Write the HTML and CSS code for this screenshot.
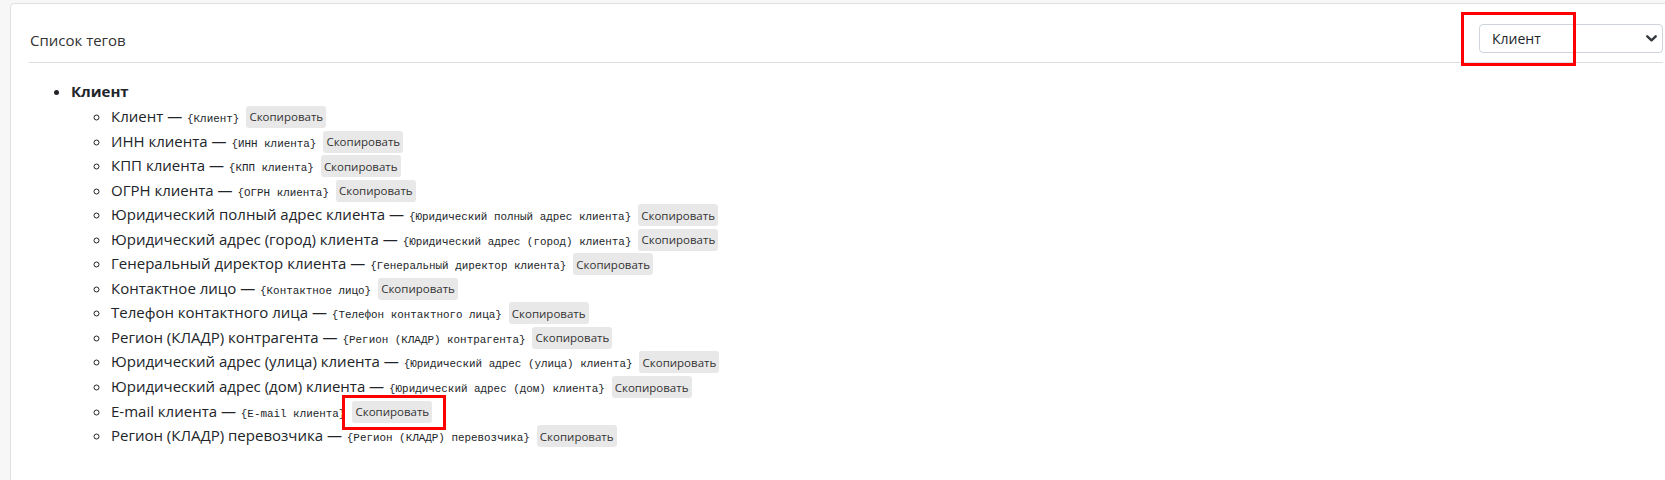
FILE: index.html
```html
<!DOCTYPE html>
<html lang="ru">
<head>
<meta charset="utf-8">
<title>Список тегов</title>
<link rel="stylesheet" href="styles.css">
</head>
<body>
<div class="card">
  <div class="card-header">
    <span class="card-title">Список тегов</span>
    <div class="select">
      <span>Клиент</span>
      <svg class="chev" width="11" height="7" viewBox="0 0 11 7"><path d="M1.3 1.3 L5.5 5.3 L9.7 1.3" fill="none" stroke="#343a40" stroke-width="2.4" stroke-linecap="round" stroke-linejoin="round"/></svg>
    </div>
  </div>
  <div class="card-body">
    <ul class="groups">
      <li><b class="group-name">Клиент</b>
        <ul class="tags">
          <li>Клиент — <code>{Клиент}</code> <button class="copy">Скопировать</button></li>
          <li>ИНН клиента — <code>{ИНН клиента}</code> <button class="copy">Скопировать</button></li>
          <li>КПП клиента — <code>{КПП клиента}</code> <button class="copy">Скопировать</button></li>
          <li>ОГРН клиента — <code>{ОГРН клиента}</code> <button class="copy">Скопировать</button></li>
          <li>Юридический полный адрес клиента — <code>{Юридический полный адрес клиента}</code> <button class="copy">Скопировать</button></li>
          <li>Юридический адрес (город) клиента — <code>{Юридический адрес (город) клиента}</code> <button class="copy">Скопировать</button></li>
          <li>Генеральный директор клиента — <code>{Генеральный директор клиента}</code> <button class="copy">Скопировать</button></li>
          <li>Контактное лицо — <code>{Контактное лицо}</code> <button class="copy">Скопировать</button></li>
          <li>Телефон контактного лица — <code>{Телефон контактного лица}</code> <button class="copy">Скопировать</button></li>
          <li>Регион (КЛАДР) контрагента — <code>{Регион (КЛАДР) контрагента}</code> <button class="copy">Скопировать</button></li>
          <li>Юридический адрес (улица) клиента — <code>{Юридический адрес (улица) клиента}</code> <button class="copy">Скопировать</button></li>
          <li>Юридический адрес (дом) клиента — <code>{Юридический адрес (дом) клиента}</code> <button class="copy">Скопировать</button></li>
          <li>E-mail клиента — <code>{E-mail клиента}</code> <button class="copy">Скопировать</button></li>
          <li>Регион (КЛАДР) перевозчика — <code>{Регион (КЛАДР) перевозчика}</code> <button class="copy">Скопировать</button></li>
        </ul>
      </li>
    </ul>
  </div>
</div>
<div class="mark mark-select"></div>
<div class="mark mark-button"></div>
</body>
</html>
```

FILE: styles.css
```css
html, body {
  margin: 0;
  padding: 0;
}
body {
  background: #f7f7f7;
  padding: 3px 0 0 10px;
  font-family: "Open Sans", "Noto Sans", sans-serif;
  color: #212529;
  overflow: hidden;
  height: 477px;
}
.card {
  background: #fff;
  border: 1px solid #e0e0e0;
  border-radius: 4px;
  margin-right: -17px;
  height: 520px;
}
.card-header {
  margin: 0 18px;
  height: 47px;
  padding-top: 11px;
  border-bottom: 1px solid #dedede;
  display: flex;
  align-items: center;
  justify-content: space-between;
}
.card-title {
  font-size: 15px;
  color: #333;
  padding-left: 1px;
  padding-top: 3px;
}
.select {
  width: 184px;
  height: 29px;
  box-sizing: border-box;
  border: 1px solid #ced4da;
  border-radius: 4px;
  display: flex;
  align-items: center;
  justify-content: space-between;
  padding: 0 5px 0 12px;
  font-size: 14px;
  color: #212529;
}
.chev { display: block; }
.card-body {
  padding: 16px 0 0 20px;
}
ul {
  margin: 0;
  padding-left: 40px;
}
.groups { list-style: disc; }
.tags { list-style: circle; }
li {
  line-height: 25px;
  font-size: 15px;
}
.group-name {
  display: block;
  height: 25px;
  font-weight: 700;
}
.tags li {
  height: 24.55px;
  white-space: nowrap;
}
code {
  font-family: "Liberation Mono", "DejaVu Sans Mono", monospace;
  font-size: 10.9px;
  color: #212529;
  margin-left: 1px;
}
.copy {
  font-family: "Open Sans", "Noto Sans", sans-serif;
  font-size: 11.5px;
  color: #333;
  background: #e8e8e8;
  border: 0;
  border-radius: 3px;
  height: 22px;
  width: 80px;
  padding: 0;
  margin-left: 3px;
  vertical-align: middle;
  position: relative;
  top: -1px;
}
.mark {
  position: absolute;
  border: 3px solid #ff0000;
  box-sizing: border-box;
}
.mark-select {
  left: 1461px;
  top: 12px;
  width: 115px;
  height: 54px;
}
.mark-button {
  left: 342px;
  top: 395px;
  width: 104px;
  height: 35px;
}
```
